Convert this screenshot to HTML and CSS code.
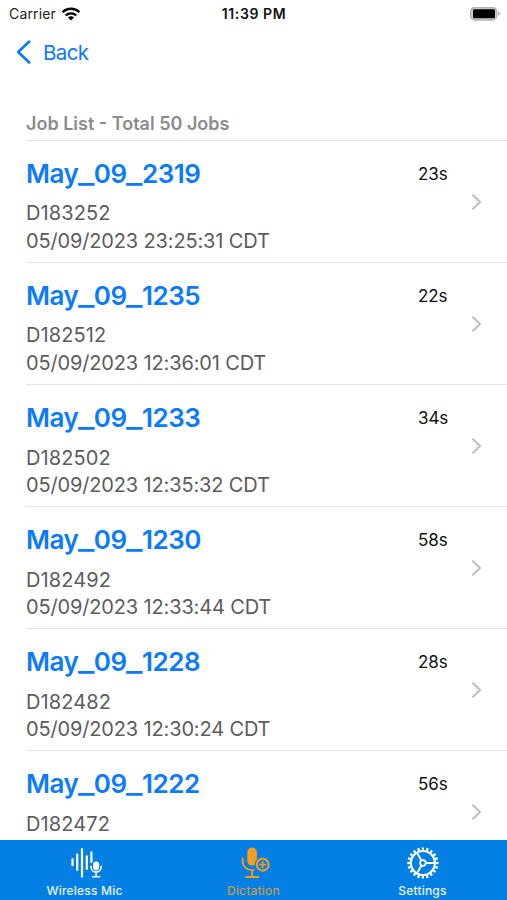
FILE: index.html
```html
<!DOCTYPE html>
<html lang="en">
<head>
  <meta charset="utf-8">
  <meta name="viewport" content="width=device-width, initial-scale=1">
  <title>Job List</title>
  <link rel="stylesheet" href="styles.css">
</head>
<body>
  <div class="screen">

    <div class="statusbar">
      <div class="carrier">
        <span>Carrier</span>
        <svg class="wifi" width="20" height="14" viewBox="0 0 20 14">
          <g fill="none" stroke="#000" stroke-width="2.3">
            <path d="M1.6 5.2a12 12 0 0 1 16.8 0"/>
            <path d="M4.7 8.5a7.6 7.6 0 0 1 10.6 0"/>
          </g>
          <path d="M10 13.6l-3.1-3.1a4.4 4.4 0 0 1 6.2 0z"/>
        </svg>
      </div>
      <div class="time"><span>11:39 PM</span></div>
      <div class="battery">
        <svg width="32" height="16" viewBox="0 0 32 16">
          <rect x="1.6" y="1.6" width="26" height="12.4" rx="3.8" fill="#ccc" stroke="#b3b3b3" stroke-width="1.3"/>
          <rect x="4" y="3.3" width="22" height="9" rx="1.2"/>
          <path d="M28.9 5.4q2.3 .8 2.3 2.3t-2.3 2.3z" fill="#b3b3b3"/>
        </svg>
      </div>
    </div>

    <div class="navbar">
      <svg width="16" height="24" viewBox="0 0 16 24">
        <path d="M13.2 1.6L2.2 12l11 10.4" fill="none" stroke="#0a7aff" stroke-width="2.7" stroke-linecap="round" stroke-linejoin="round"/>
      </svg>
      <span class="back">Back</span>
    </div>

    <div class="list">
      <div class="list-header"><span>Job List - Total 50 Jobs</span></div>

      <div class="job">
        <div class="info">
          <div class="name">May<span>_</span>09<span>_</span>2319</div>
          <div class="detail">D183252</div>
          <div class="detail date">05/09/2023 23:25:31 CDT</div>
        </div>
        <div class="length">23s</div>
        <svg class="arrow" width="12" height="18" viewBox="0 0 12 18"><path d="M2 2.2L9 9l-7 6.8"/></svg>
      </div>

      <div class="job">
        <div class="info">
          <div class="name">May<span>_</span>09<span>_</span>1235</div>
          <div class="detail">D182512</div>
          <div class="detail date">05/09/2023 12:36:01 CDT</div>
        </div>
        <div class="length">22s</div>
        <svg class="arrow" width="12" height="18" viewBox="0 0 12 18"><path d="M2 2.2L9 9l-7 6.8"/></svg>
      </div>

      <div class="job">
        <div class="info">
          <div class="name">May<span>_</span>09<span>_</span>1233</div>
          <div class="detail">D182502</div>
          <div class="detail date">05/09/2023 12:35:32 CDT</div>
        </div>
        <div class="length">34s</div>
        <svg class="arrow" width="12" height="18" viewBox="0 0 12 18"><path d="M2 2.2L9 9l-7 6.8"/></svg>
      </div>

      <div class="job">
        <div class="info">
          <div class="name">May<span>_</span>09<span>_</span>1230</div>
          <div class="detail">D182492</div>
          <div class="detail date">05/09/2023 12:33:44 CDT</div>
        </div>
        <div class="length">58s</div>
        <svg class="arrow" width="12" height="18" viewBox="0 0 12 18"><path d="M2 2.2L9 9l-7 6.8"/></svg>
      </div>

      <div class="job">
        <div class="info">
          <div class="name">May<span>_</span>09<span>_</span>1228</div>
          <div class="detail">D182482</div>
          <div class="detail date">05/09/2023 12:30:24 CDT</div>
        </div>
        <div class="length">28s</div>
        <svg class="arrow" width="12" height="18" viewBox="0 0 12 18"><path d="M2 2.2L9 9l-7 6.8"/></svg>
      </div>

      <div class="job">
        <div class="info">
          <div class="name">May<span>_</span>09<span>_</span>1222</div>
          <div class="detail">D182472</div>
        </div>
        <div class="length">56s</div>
        <svg class="arrow" width="12" height="18" viewBox="0 0 12 18"><path d="M2 2.2L9 9l-7 6.8"/></svg>
      </div>
    </div>

    <div class="tabbar">
      <div class="tab">
        <svg width="34" height="32" viewBox="0 0 34 32">
          <g fill="none" stroke="#fff" stroke-width="2.2" stroke-linecap="round">
            <path d="M4.5 12.2v6M9.2 7.5v15.5M14 2.2v27.4M18.8 9.4v12.6M23.4 5.4v9.6" />
            <path d="M23 19.4c0 7.6 10.2 7.6 10.2 0M28.1 25.4v4.2M24.6 29.8h7" stroke-width="1.6"/>
          </g>
          <rect x="25.1" y="14.6" width="6" height="9" rx="3" fill="#fff"/>
        </svg>
        <span>Wireless Mic</span>
      </div>
      <div class="tab active">
        <svg width="34" height="32" viewBox="0 0 34 32">
          <rect x="10.3" y="0.6" width="9.6" height="18" rx="4.8" fill="#f79c1d"/>
          <path d="M5.7 11.5v3.2c0 4.8 4 8.4 9.4 8.4h1.4M15.1 23.2v6.2M8.9 30h12.4" fill="none" stroke="#f79c1d" stroke-width="1.8" stroke-linecap="round"/>
          <circle cx="25.7" cy="17.7" r="7.9" fill="#0480e4"/>
          <circle cx="25.7" cy="17.7" r="5.9" fill="none" stroke="#f79c1d" stroke-width="2.1"/>
          <path d="M25.7 14.3v6.8M22.3 17.7h6.8" stroke="#f79c1d" stroke-width="1.8"/>
        </svg>
        <span>Dictation</span>
      </div>
      <div class="tab">
        <svg width="34" height="32" viewBox="0 0 34 32">
          <g fill="none" stroke="#fff">
            <circle cx="16.9" cy="16" r="14.2" stroke-width="2.8" pathLength="80" stroke-dasharray="2 2" stroke-dashoffset="1"/>
            <circle cx="16.9" cy="16" r="12" stroke-width="2.2"/>
            <circle cx="16.9" cy="16" r="2.8" stroke-width="1.7"/>
            <path d="M19.8 16h8.6M15.4 13.5l-4.4-7.7M15.4 18.5l-4.4 7.7" stroke-width="1.9"/>
          </g>
        </svg>
        <span>Settings</span>
      </div>
    </div>

  </div>
</body>
</html>
```

FILE: styles.css
```css
body {
  margin: 0;
  background-color: #fff;
  font-family: Inter, "Liberation Sans", sans-serif;
}

.screen {
  display: flex;
  flex-direction: column;
  width: 507px;
  height: 900px;
  overflow: hidden;
}

/* Status bar */
.statusbar {
  display: grid;
  grid-template-columns: 1fr auto 1fr;
  align-items: center;
  height: 27px;
  padding: 0 6px 0 9px;
  font-size: 14px;
  color: #222;
}

.carrier {
  display: flex;
  align-items: center;
  gap: 5px;
  letter-spacing: 0.15px;
}

.time {
  padding-right: 2px;
  font-weight: 600;
  letter-spacing: 0.6px;
  color: #111;
}

.battery {
  display: flex;
  justify-content: flex-end;
}

/* Back button row */
.navbar {
  display: flex;
  align-items: center;
  gap: 11px;
  height: 50px;
  padding-left: 16px;
  font-size: 20.5px;
  letter-spacing: -0.6px;
  color: #0a7aff;
}

/* Job list */
.list {
  flex: 1;
  min-height: 0;
  overflow: hidden;
  padding-left: 26px;
}

.list-header {
  box-sizing: border-box;
  height: 64px;
  padding-top: 35px;
  border-bottom: 1px solid #e4e4e4;
  font-size: 18px;
  line-height: 24px;
  font-weight: 600;
  color: #8b8b8e;
}

.job {
  box-sizing: border-box;
  display: flex;
  height: 122.1px;
  padding: 15px 24px 0 0;
  border-bottom: 1px solid #e4e4e4;
}

.info {
  flex: 1;
}

.name {
  height: 35px;
  margin-bottom: 9.4px;
  font-size: 26px;
  line-height: 36px;
  font-weight: 600;
  letter-spacing: -0.5px;
  color: #0a7aff;
}

/* wider underscore between the parts of the job name */
.name span {
  display: inline-block;
  margin: 0 2.4px 0 1.4px;
  transform: scaleX(1.35);
}

.detail {
  font-size: 20px;
  line-height: 27.2px;
  letter-spacing: 0.1px;
  color: #5c5c5c;
}

.date {
  letter-spacing: -0.15px;
}

.length {
  width: 53px;
  font-size: 17px;
  line-height: 36px;
  letter-spacing: -0.1px;
  color: #111;
}

.arrow {
  margin-top: 36.5px;
  fill: none;
  stroke: #c2c2c4;
  stroke-width: 2.3;
  stroke-linecap: round;
  stroke-linejoin: round;
}

/* Bottom tabs */
.tabbar {
  display: flex;
  height: 60px;
  background-color: #0480e4;
}

.tab {
  flex: 1;
  display: flex;
  flex-direction: column;
  align-items: center;
  padding-top: 7px;
  font-size: 12px;
  line-height: 16px;
  font-weight: 500;
  letter-spacing: 0.2px;
  color: #e6f3ff;
}

.tab span {
  margin-top: 4px;
}

.active {
  color: #c39a50;
}
```
